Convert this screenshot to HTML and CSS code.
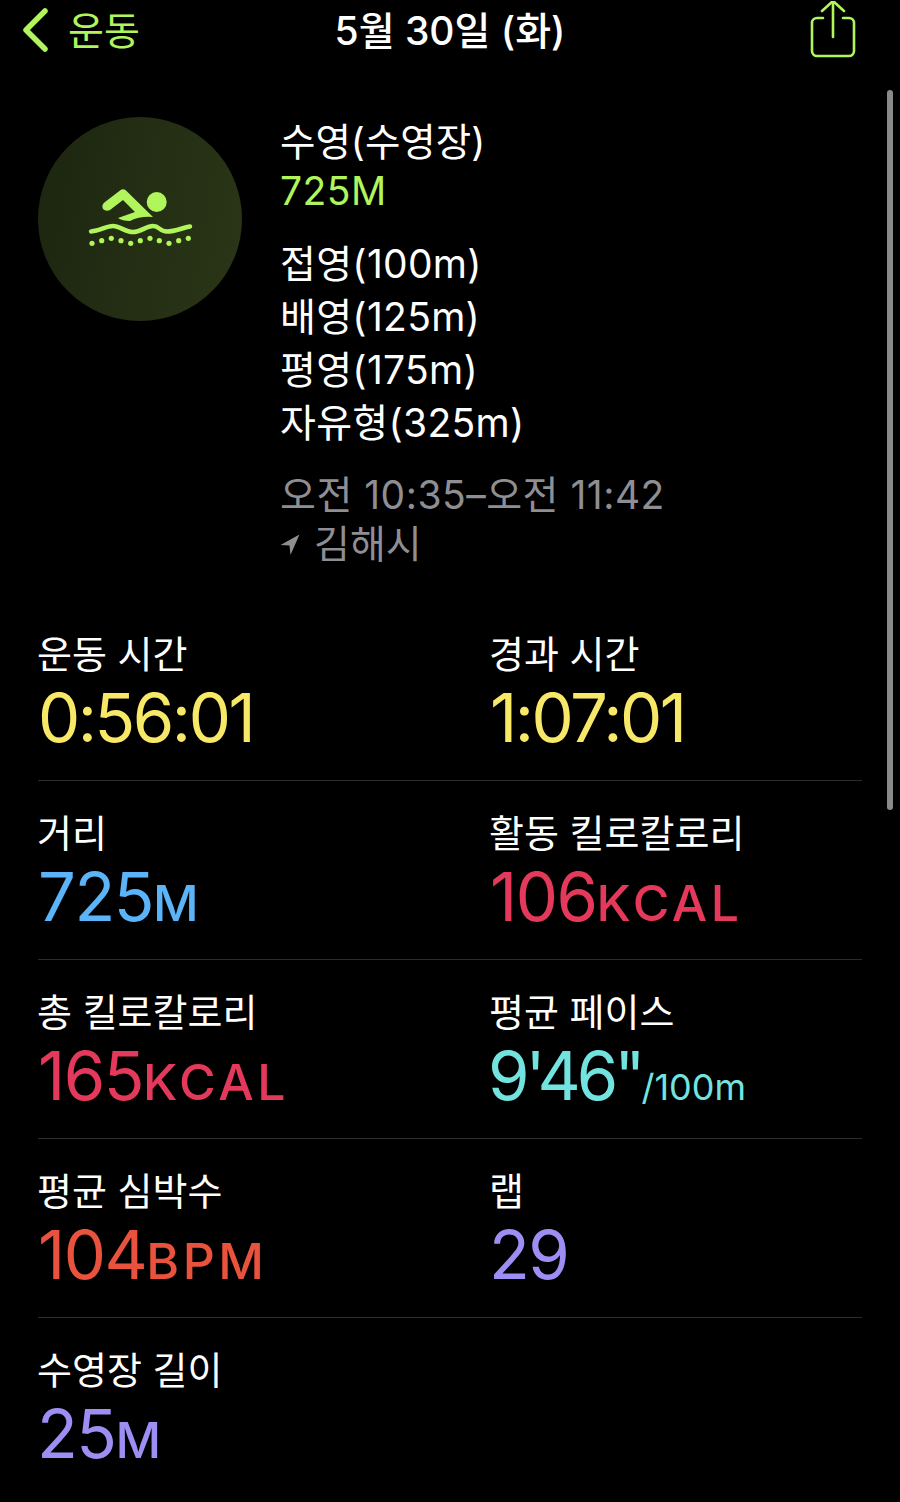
FILE: index.html

```html
<!DOCTYPE html>
<html lang="ko">
<head>
    <meta charset="UTF-8">
    <meta name="viewport" content="width=device-width, initial-scale=1.0">
    <title>5월 30일 (화)</title>
    <link rel="stylesheet" href="styles.css">
</head>
<body>
    <header class="nav">
        <div class="nav-back">
            <svg class="chevron" width="30" height="48" viewBox="0 0 30 48"><path d="M25 5 6 24l19 19" fill="none" stroke="#b0f55c" stroke-width="5.5" stroke-linecap="round" stroke-linejoin="round"/></svg>
            <span class="nav-back-label">운동</span>
        </div>
        <h1 class="nav-title">5월 30일 (화)</h1>
        <svg class="share" width="48" height="58" viewBox="0 0 48 58"><g fill="none" stroke="#b0f55c" stroke-width="2.6" stroke-linecap="round" stroke-linejoin="round"><path d="M14 17H8a5 5 0 0 0-5 5v28a5 5 0 0 0 5 5h32a5 5 0 0 0 5-5V22a5 5 0 0 0-5-5h-6"/><path d="M24 36V1"/><path d="M13 10 24 0l11 10"/></g></svg>
    </header>

    <section class="summary">
        <div class="badge">
            <svg width="106" height="64" viewBox="87 187 106 64">
                <g fill="#b0f55c">
                    <path d="M105 202 120 190.500Q123 188 126 190.500L153 217Q140 216 130 221 122 221 118 218L135 212 123 200 110 210Q106 212 103 209 101 205 105 202z"/>
                    <circle cx="156.700" cy="202" r="10"/>
                    <path d="M91 231.500C100 231 106 226 113 226S125 232 133 232 146 226 153 226 159 231.500 167 231.500 182 228 190 226.500" fill="none" stroke="#b0f55c" stroke-width="4.500" stroke-linecap="round"/>
                    <circle cx="92" cy="243.300" r="2.600"/><circle cx="101.700" cy="240.700" r="2.600"/><circle cx="111.300" cy="238.300" r="2.600"/><circle cx="121" cy="240.700" r="2.600"/><circle cx="130.700" cy="243.300" r="2.600"/><circle cx="140.300" cy="240.700" r="2.600"/><circle cx="150" cy="238.300" r="2.600"/><circle cx="159.300" cy="240.700" r="2.600"/><circle cx="169" cy="243.300" r="2.600"/><circle cx="178.700" cy="240.700" r="2.600"/><circle cx="188.300" cy="238.300" r="2.600"/>
                </g>
            </svg>
        </div>
        <div class="summary-text">
            <div class="workout-name">수영(수영장)</div>
            <div class="workout-distance">725M</div>
            <ul class="stroke-list">
                <li>접영(100m)</li>
                <li>배영(125m)</li>
                <li>평영(175m)</li>
                <li>자유형(325m)</li>
            </ul>
            <div class="workout-time">오전 10:35–오전 11:42</div>
            <div class="workout-place">
                <svg width="20" height="21" viewBox="0 0 20 21"><path d="M19.500.500.500 11l9 .500 1 9.500z" fill="#8e8e93"/></svg>
                <span>김해시</span>
            </div>
        </div>
    </section>

    <section class="stats">
        <div class="stat">
            <div class="stat-label">운동 시간</div>
            <div class="stat-value yellow">0:56:01</div>
        </div>
        <div class="stat">
            <div class="stat-label">경과 시간</div>
            <div class="stat-value yellow">1:07:01</div>
        </div>
        <div class="stat">
            <div class="stat-label">거리</div>
            <div class="stat-value blue">725<span class="unit">M</span></div>
        </div>
        <div class="stat">
            <div class="stat-label">활동 킬로칼로리</div>
            <div class="stat-value red">106<span class="unit">KCAL</span></div>
        </div>
        <div class="stat">
            <div class="stat-label">총 킬로칼로리</div>
            <div class="stat-value red">165<span class="unit">KCAL</span></div>
        </div>
        <div class="stat">
            <div class="stat-label">평균 페이스</div>
            <div class="stat-value teal">9'46"<span class="unit-small">/100m</span></div>
        </div>
        <div class="stat">
            <div class="stat-label">평균 심박수</div>
            <div class="stat-value orange">104<span class="unit">BPM</span></div>
        </div>
        <div class="stat">
            <div class="stat-label">랩</div>
            <div class="stat-value purple">29</div>
        </div>
        <div class="stat stat-last">
            <div class="stat-label">수영장 길이</div>
            <div class="stat-value purple">25<span class="unit">M</span></div>
        </div>
    </section>

    <div class="scrollbar"></div>
</body>
</html>
```

FILE: styles.css

```css
body {
    font-family: Inter, "Noto Sans CJK KR", sans-serif;
    background-color: #000;
    color: #fff;
    margin: 0;
    padding: 0;
    height: 1502px;
    overflow: hidden;
    position: relative;
}

.nav {
    display: grid;
    grid-template-columns: 1fr auto 1fr;
    align-items: center;
    height: 60px;
    padding: 0 43px;
}
.nav-back {
    display: flex;
    align-items: center;
    gap: 18px;
    margin-left: -23px;
    color: #b0f55c;
}
.chevron {
    flex: none;
}
.nav-back-label {
    font-size: 39px;
    font-weight: 400;
    margin-bottom: 4px;
}
.nav-title {
    margin: 0 0 4px;
    font-size: 39px;
    font-weight: 500;
    white-space: nowrap;
}
.share {
    justify-self: end;
}

.summary {
    display: flex;
    gap: 39px;
    padding: 57px 38px 0;
}
.badge {
    flex: none;
    width: 204px;
    height: 204px;
    border-radius: 50%;
    background: linear-gradient(100deg, #1c2610, #2b3617);
    display: flex;
    align-items: center;
    justify-content: center;
}
.summary-text {
    font-size: 39px;
    font-weight: 400;
    line-height: 53px;
    margin-left: -1px;
}
.workout-name {
    font-size: 38.5px;
    line-height: 50px;
}
.workout-distance {
    color: #b0f55c;
    line-height: 48px;
    letter-spacing: 0.5px;
}
.stroke-list {
    list-style: none;
    margin: 22px 0 0;
    padding: 0;
    letter-spacing: 0.3px;
}
.workout-time {
    margin-top: 21px;
    color: #8e8e93;
    line-height: 50px;
    letter-spacing: 0.5px;
}
.workout-place {
    display: flex;
    align-items: center;
    gap: 14px;
    color: #8e8e93;
    line-height: 48px;
}

.stats {
    display: grid;
    grid-template-columns: 452px 1fr;
    margin: 34px 38px 0;
}
.stat {
    height: 179px;
    border-bottom: 1px solid #2c2c2e;
    padding-top: 31px;
    box-sizing: border-box;
}
.stat-last {
    border-bottom: none;
}
.stat-label {
    font-size: 38px;
    font-weight: 400;
    line-height: 42px;
    margin-left: -1px;
}
.stat-value {
    font-size: 67px;
    font-weight: 400;
    line-height: 85px;
    letter-spacing: -1.5px;
}
.unit {
    font-size: 50px;
    font-weight: 500;
    letter-spacing: 3.5px;
}
.unit-small {
    font-size: 36px;
    font-weight: 400;
    letter-spacing: 0;
}

.yellow {
    color: #f7e868;
    letter-spacing: -2.5px;
}
.blue { color: #5bb4f7; }
.red { color: #e5395c; }
.teal {
    color: #72e3de;
    letter-spacing: -4px;
    margin-left: -2px;
}
.orange { color: #e9523c; }
.purple {
    color: #9c8ef2;
    margin-left: -1px;
}

.scrollbar {
    position: absolute;
    top: 90px;
    left: 887px;
    width: 6px;
    height: 720px;
    border-radius: 3px;
    background-color: #8a8a8a;
}
```
